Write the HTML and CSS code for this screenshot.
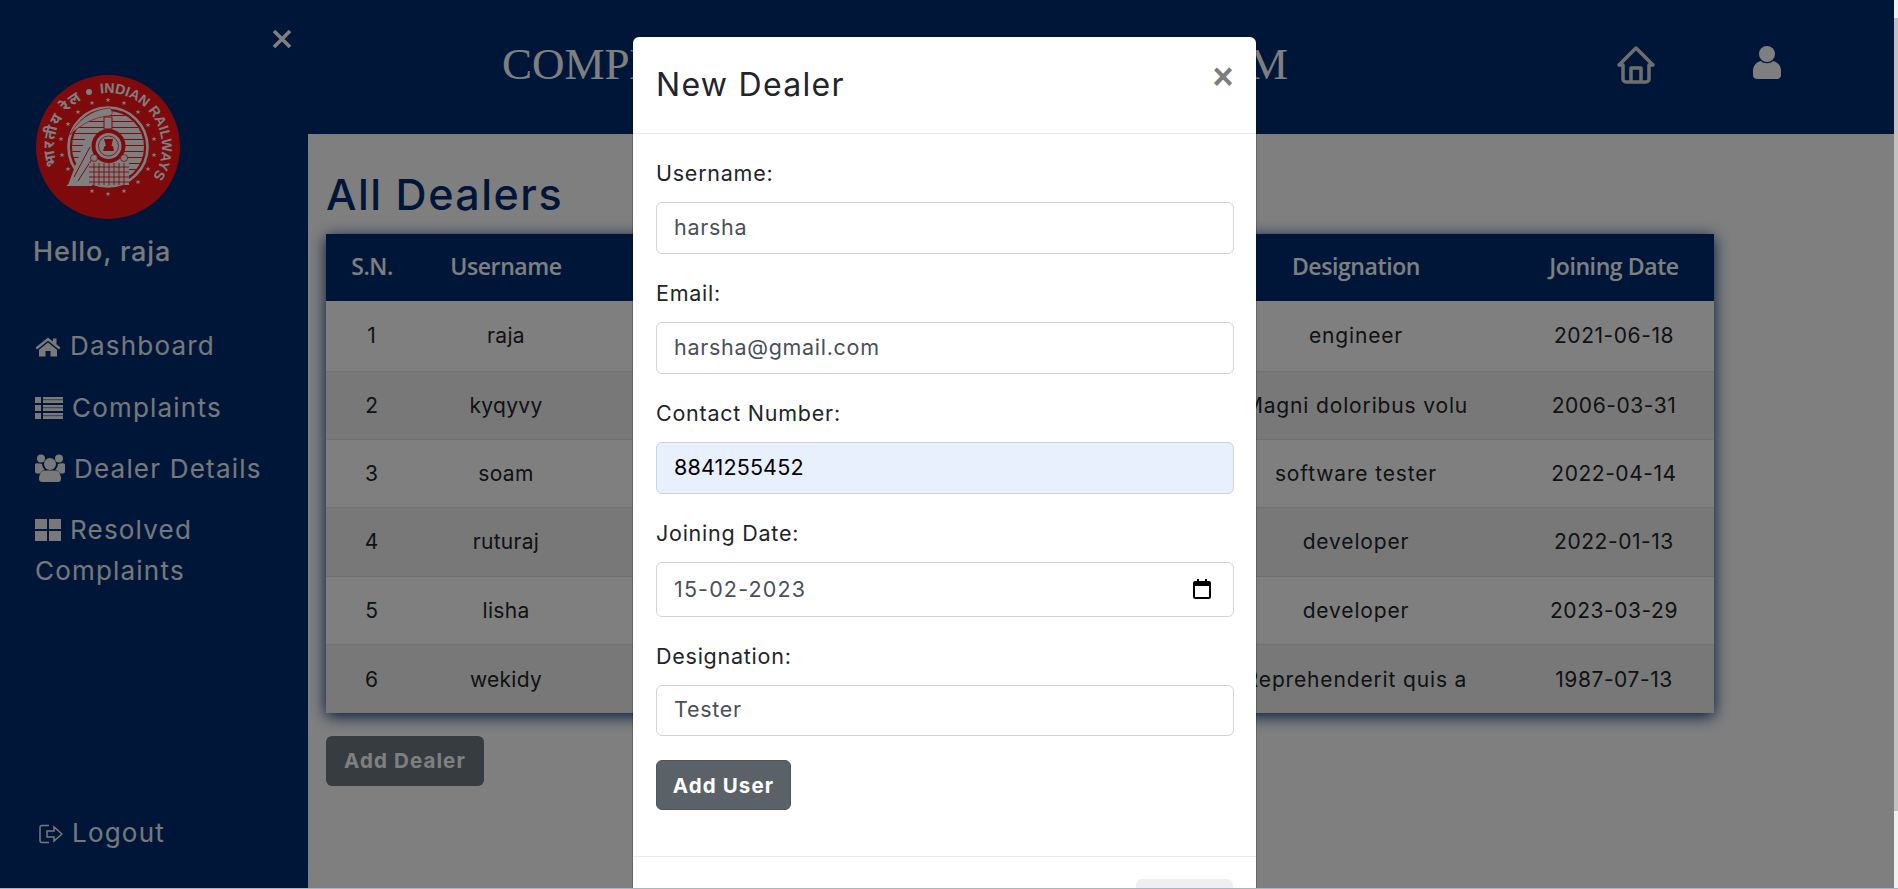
FILE: index.html
```html
<!DOCTYPE html>
<html lang="en">
<head>
<meta charset="utf-8">
<title>All Dealers</title>
<link rel="stylesheet" href="styles.css">
</head>
<body>
<div class="window">
  <div class="app">
    <aside class="sidebar">
      <div class="side-close">
        <svg class="x-icon" viewBox="0 0 20 20"><path d="M2 2 L18 18 M18 2 L2 18"/></svg>
      </div>
      <svg class="logo" viewBox="0 0 144 144">
        <defs>
          <path id="arcEn" d="M64.500 18.500 A54 54 0 0 1 116.800 102.200" fill="none"/>
          <path id="arcHi" d="M21.300 90.500 A54 54 0 0 1 45.800 24.800" fill="none"/>
          <polygon id="star" points="0,-2.6 0.7,-0.8 2.5,-0.8 1.1,0.3 1.6,2.1 0,1 -1.6,2.1 -1.1,0.3 -2.5,-0.8 -0.7,-0.8"/>
          <clipPath id="discClip"><circle cx="72" cy="72" r="36"/></clipPath>
        </defs>
        <circle cx="72" cy="72" r="72" fill="#fd1418"/>
        <circle cx="53" cy="17" r="3" fill="#fff"/>
        <text class="logo-en"><textPath href="#arcEn" textLength="124" lengthAdjust="spacing">INDIAN RAILWAYS</textPath></text>
        <text class="logo-hi"><textPath href="#arcHi" textLength="76">भारतीय रेल</textPath></text>
        <g fill="#fff">
          <use href="#star" x="72" y="25"/><use href="#star" x="88" y="28"/><use href="#star" x="102" y="37"/>
          <use href="#star" x="112" y="50"/><use href="#star" x="118" y="64"/><use href="#star" x="118" y="80"/>
          <use href="#star" x="112" y="94"/><use href="#star" x="102" y="107"/><use href="#star" x="88" y="116"/>
          <use href="#star" x="72" y="119"/><use href="#star" x="56" y="116"/><use href="#star" x="32" y="94"/>
          <use href="#star" x="26" y="80"/><use href="#star" x="25" y="64"/><use href="#star" x="32" y="49"/>
          <use href="#star" x="42" y="37"/><use href="#star" x="56" y="28"/>
        </g>
        <circle cx="72" cy="72" r="39.5" fill="none" stroke="#fff" stroke-width="2.6"/>
        <g clip-path="url(#discClip)">
          <rect x="30" y="30" width="84" height="84" fill="#fff"/>
          <path d="M30 40.500H114M30 46.500H114M30 52.500H114M30 58.500H114M30 64.500H114M30 70.500H114M30 76.500H114M30 82.500H114M30 88.500H114M30 94.500H114M30 100.500H114" stroke="#fd1418" stroke-width="1.1"/>
        </g>
        <path d="M74 33 C58 34 42 44 34 60 C46 48 60 42 72 41 C76 41 78 38 74 33Z" fill="#fff" stroke="#fd1418" stroke-width=".6"/>
        <path d="M32 110 L50 62 L58 62 L54 110Z" fill="#fff"/>
        <path d="M38 102 L54 72 M42 106 L56 84" stroke="#fd1418" stroke-width="1"/>
        <path d="M30 111 H56 V107 H36Z" fill="#fff"/>
        <rect x="68" y="42" width="8" height="12" fill="#fff" stroke="#fd1418"/>
        <circle cx="72.500" cy="71" r="17" fill="#fd1418"/>
        <circle cx="72.500" cy="71" r="13" fill="#fff"/>
        <circle cx="72.500" cy="71" r="10" fill="none" stroke="#fd1418" stroke-width=".8"/>
        <path d="M68 64H77L75.500 71H77L78 76H67L68.500 71H70Z" fill="#fd1418"/>
        <g>
          <rect x="53" y="88" width="40" height="22" fill="#fff"/>
          <path d="M53 92H93M53 97H93M53 102H93M53 107H93M58 88V110M63 88V110M68 88V110M73 88V110M78 88V110M83 88V110M88 88V110" stroke="#fd1418" stroke-width=".9"/>
          <circle cx="58" cy="83" r="3.500" fill="#fff" stroke="#fd1418" stroke-width=".8"/>
          <circle cx="88" cy="83" r="3.500" fill="#fff" stroke="#fd1418" stroke-width=".8"/>
        </g>
      </svg>
      <h4 class="hello">Hello, raja</h4>
      <nav class="nav">
        <a class="nav-link nav-dash">
          <svg class="nav-icon ic-home" viewBox="0 0 26 20"><path d="M13 0.500 L0.500 10.500 L2 12.500 L13 3.800 L24 12.500 L25.500 10.500 L21.500 7.300 V1.500 H18 V4.500Z"/><path d="M13 5.500 L4 12.800 V19.500 H10.500 V14 H15.500 V19.500 H22 V12.800Z"/></svg>Dashboard
        </a>
        <a class="nav-link nav-comp">
          <svg class="nav-icon ic-list" viewBox="0 0 28 22"><path d="M0 0H6V6H0ZM8 0H28V6H8ZM0 8H6V14H0ZM8 8H28V14H8ZM0 16H6V22H0ZM8 16H28V22H8Z" /><path d="M8 2.700H28M8 10.700H28M8 18.700H28" stroke="#002d73" stroke-width=".6"/></svg>Complaints
        </a>
        <a class="nav-link nav-deal">
          <svg class="nav-icon ic-users" viewBox="0 0 30 28"><circle cx="6" cy="4.500" r="4"/><circle cx="24" cy="4.500" r="4"/><circle cx="15" cy="10" r="6"/><path d="M0 10.500 C0 9 4 9 7 10 C7.500 12.500 8 14 9.500 15.500 C7.500 16.500 6 18 5 19.500 H2 C0.500 19.500 0 18.500 0 17Z"/><path d="M30 10.500 C30 9 26 9 23 10 C22.500 12.500 22 14 20.500 15.500 C22.500 16.500 24 18 25 19.500 H28 C29.500 19.500 30 18.500 30 17Z"/><path d="M9 16.500 H21 C24 17 26 21 26 25 C26 27 24.500 28 23 28 H7 C5.500 28 4 27 4 25 C4 21 6 17 9 16.500Z"/></svg>Dealer Details
        </a>
        <a class="nav-link nav-res">
          <svg class="nav-icon ic-grid" viewBox="0 0 26 22"><path d="M0 0H12V10H0ZM14 0H26V10H14ZM0 12H12V22H0ZM14 12H26V22H14Z"/></svg>Resolved Complaints
        </a>
      </nav>
      <a class="nav-link logout">
        <svg class="nav-icon ic-out" viewBox="0 0 24 20"><path d="M10 1.500 H3 A2 2 0 0 0 1 3.500 V16.500 A2 2 0 0 0 3 18.500 H10 M8 7 H15 V3 L23 10 L15 17 V13 H8Z"/></svg>Logout
      </a>
    </aside>
    <main class="main">
      <header class="topbar">
        <h1 class="brand">COMPLAINT MANAGEMENT SYSTEM</h1>
        <svg class="top-home" viewBox="0 0 38 38"><path d="M19 2 L2 19 H6 V33 A3 3 0 0 0 9 36 H29 A3 3 0 0 0 32 33 V19 H36Z M14 36 V22 H24 V36"/></svg>
        <svg class="top-user" viewBox="0 0 28 33"><circle cx="14" cy="8" r="8"/><path d="M8 15 C10 18 18 18 20 15 C25 16 28 20 28 25 V29 C28 31.500 26 33 24 33 H4 C2 33 0 31.500 0 29 V25 C0 20 3 16 8 15Z"/></svg>
      </header>
      <section class="content">
        <h2 class="page-title">All Dealers</h2>
        <table class="dealers">
          <colgroup><col class="c-sn"><col class="c-user"><col class="c-mail"><col class="c-phone"><col class="c-desig"><col class="c-date"></colgroup>
          <thead>
            <tr><th>S.N.</th><th>Username</th><th>Email</th><th>Contact Number</th><th>Designation</th><th>Joining Date</th></tr>
          </thead>
          <tbody>
            <tr class="first"><td>1</td><td>raja</td><td>raja@gmail.com</td><td>9876543210</td><td>engineer</td><td>2021-06-18</td></tr>
            <tr><td>2</td><td>kyqyvy</td><td>ky@mail.com</td><td>1987654321</td><td>Magni doloribus volu</td><td>2006-03-31</td></tr>
            <tr><td>3</td><td>soam</td><td>soam@gmail.com</td><td>8765432109</td><td>software tester</td><td>2022-04-14</td></tr>
            <tr><td>4</td><td>ruturaj</td><td>raj@gmail.com</td><td>7654321098</td><td>developer</td><td>2022-01-13</td></tr>
            <tr><td>5</td><td>lisha</td><td>lisha@gmail.com</td><td>6543210987</td><td>developer</td><td>2023-03-29</td></tr>
            <tr><td>6</td><td>wekidy</td><td>wek@mail.com</td><td>1543210987</td><td>Reprehenderit quis a</td><td>1987-07-13</td></tr>
          </tbody>
        </table>
        <button class="btn btn-dealer" type="button">Add Dealer</button>
      </section>
    </main>
    <div class="backdrop"></div>
    <div class="modal">
      <div class="modal-head">
        <h4 class="modal-title">New Dealer</h4>
        <button class="modal-x" type="button">×</button>
      </div>
      <form class="modal-body">
        <div class="group"><label class="lbl">Username:</label><input class="field" type="text" value="harsha"></div>
        <div class="group"><label class="lbl">Email:</label><input class="field" type="text" value="harsha@gmail.com"></div>
        <div class="group"><label class="lbl">Contact Number:</label><input class="field filled" type="text" value="8841255452"></div>
        <div class="group date-group"><label class="lbl">Joining Date:</label>
          <div class="field date-field"><input class="date-input" type="text" value="15-02-2023">
            <svg class="cal" viewBox="0 0 18 20"><path d="M4 0H6V2H12V0H14V2H16A2 2 0 0 1 18 4V18A2 2 0 0 1 16 20H2A2 2 0 0 1 0 18V4A2 2 0 0 1 2 2H4ZM2 7V18H16V7Z"/></svg>
          </div>
        </div>
        <div class="group last"><label class="lbl">Designation:</label><input class="field" type="text" value="Tester"></div>
        <button class="btn btn-add" type="button">Add User</button>
      </form>
      <div class="modal-foot"><button class="btn-close" type="button">Close</button></div>
    </div>
  </div>
  <div class="scrollbar"><div class="thumb"></div></div>
</div>
<div class="edge"></div>
</body>
</html>
```
FILE: styles.css
```css
* { box-sizing: border-box; }
html, body { margin: 0; height: 889px; overflow: hidden; }
body { font-family: Inter, "Noto Sans", sans-serif; color: #212529; background: #fff; }

.window { display: flex; height: 888px; }
.edge { height: 1px; background: #a9b6bb; }
.scrollbar { width: 4px; background: #f1f1f1; padding: 18px 0 77px; }
.thumb { height: 100%; background: #c1c1c1; }

.app { position: relative; flex: 1; display: flex; overflow: hidden; }

/* sidebar */
.sidebar { width: 308px; flex: none; background: #002d73; color: #f2f2f2; padding: 0 0 0 35px; display: flex; flex-direction: column; }
.side-close { height: 75px; display: flex; justify-content: flex-end; padding: 29px 16px 0 0; }
.x-icon { width: 20px; height: 20px; fill: none; stroke: #fff; stroke-width: 3.6; }
.logo { width: 144px; height: 144px; margin-left: 1px; }
.logo-en { font-family: "Liberation Sans", sans-serif; font-weight: 700; font-size: 14px; fill: #fff; }
.logo-hi { font-family: "Noto Sans", "DejaVu Sans", sans-serif; font-weight: 700; font-size: 15px; fill: #fff; }
.hello { margin: 15px 0 0 -2px; font-size: 27px; line-height: 36px; font-weight: 500; color: #f4f4f4; letter-spacing: .85px; }
.nav { display: flex; flex-direction: column; margin-top: 55px; }
.nav-link { display: block; font-size: 26px; line-height: 41px; color: #eef0f2; letter-spacing: 1.2px; }
.nav-comp { margin-top: 21px; }
.nav-deal, .nav-res { margin-top: 20px; }
.nav-icon { fill: #f2f2f2; vertical-align: -2px; margin-right: 9px; }
.ic-home { width: 26px; height: 20px; }
.ic-list { width: 28px; height: 22px; margin-right: 9px; vertical-align: -2px; }
.ic-users { width: 30px; height: 28px; margin-right: 9px; vertical-align: -4px; }
.ic-grid { width: 26px; height: 22px; }
.ic-out { width: 24px; height: 20px; fill: none; stroke: #f2f2f2; stroke-width: 1.5; margin-left: 4px; margin-right: 9px; }
.logout { margin-top: auto; margin-bottom: 35px; }

/* main */
.main { flex: 1; min-width: 0; display: flex; flex-direction: column; background: #fff; }
.topbar { height: 134px; flex: none; background: #002d73; display: flex; align-items: flex-start; padding: 37px 113px 0 194px; }
.brand { margin: 0; font-family: "Liberation Serif", serif; font-weight: 400; font-size: 45px; line-height: 54px; color: #fff; white-space: nowrap; }
.top-home { width: 38px; height: 38px; margin: 9px 0 0 auto; fill: none; stroke: #ddd; stroke-width: 3.5; stroke-linejoin: round; }
.top-user { width: 28px; height: 33px; margin: 9px 0 0 98px; fill: #fff; }
.content { padding: 0 0 0 18px; }
.page-title { margin: 0; height: 100px; padding-top: 35px; font-size: 43px; line-height: 50px; font-weight: 500; color: #002d73; letter-spacing: 1.5px; }

.dealers { table-layout: fixed; width: 1388px; border-collapse: collapse; box-shadow: 0 3px 15px #002d73; background: #fff; }
.c-sn { width: 92px; } .c-user { width: 176px; } .c-mail { width: 302px; } .c-phone { width: 302px; } .c-desig { width: 316px; } .c-date { width: 200px; }
.dealers th { height: 67px; background: #002d73; color: #fff; font-family: "Open Sans", sans-serif; font-weight: 600; font-size: 23px; text-align: center; padding: 0 0 4px; letter-spacing: -.4px; }
.dealers td { height: 68.4px; text-align: center; padding: 0; font-size: 21px; color: #212529; border-top: 1px solid #dee2e6; white-space: nowrap; overflow: hidden; letter-spacing: .85px; }
.dealers td:nth-child(2) { letter-spacing: .3px; }
.dealers td:nth-child(6) { letter-spacing: .55px; }
.dealers tr.first td { height: 70px; border-top: 0; }
.dealers tbody tr:nth-child(even) td { background: #f0f0f0; }

.btn { display: block; border: 1px solid transparent; border-radius: 6px; font-family: inherit; font-weight: 700; font-size: 20.5px; letter-spacing: 1.1px; }
.btn-dealer { margin-top: 23px; width: 158px; height: 50px; background: #6f7980; color: #fff; padding: 0; }

/* modal */
.backdrop { position: absolute; inset: 0; background: rgba(0,0,0,.5); }
.modal { position: absolute; left: 633px; top: 37px; width: 623px; background: #fff; border-radius: 6px; box-shadow: 0 0 0 1px rgba(0,0,0,.2); }
.modal-head { height: 97px; border-bottom: 1px solid #e9ecef; padding: 0 23px; display: flex; justify-content: space-between; }
.modal-title { margin: 0; padding-top: 28px; font-size: 32px; line-height: 40px; font-weight: 400; color: #212529; letter-spacing: 1.3px; }
.modal-x { border: 0; background: none; padding: 0; margin: 15px -2px 0 0; width: 24px; height: 50px; font: 700 36px/50px "Liberation Sans", sans-serif; color: #7d7d7d; }
.modal-body { padding: 25px 23px 46px; }
.group { margin-bottom: 25.5px; }
.group.date-group { margin-bottom: 24.5px; }
.group.last { margin-bottom: 24px; }
.lbl { display: block; height: 30px; line-height: 28px; margin-bottom: 13px; font-size: 21.5px; color: #212529; letter-spacing: .75px; }
.field { display: block; width: 578px; height: 51.5px; border: 1px solid #ced4da; border-radius: 6px; padding: 0 17px 2px; font-family: inherit; font-size: 21.5px; color: #495057; background: #fff; letter-spacing: .7px; }
.filled { background: #e8f0fe; color: #000; letter-spacing: .15px; }
.date-field { display: flex; align-items: center; justify-content: space-between; height: 55px; padding-right: 22px; letter-spacing: 1.15px; }
.date-input { border: 0; padding: 0; flex: 1; min-width: 0; font: inherit; color: inherit; letter-spacing: inherit; background: none; outline: none; }
.cal { width: 18px; height: 20px; fill: #000; }
.btn-add { width: 135px; height: 50px; background: #5a6268; color: #fff; border-color: #4e555b; padding: 0; }
.modal-foot { border-top: 1px solid #e9ecef; padding: 22px 23px 30px; display: flex; justify-content: flex-end; }
.btn-close { width: 97px; height: 50px; border: 0; border-radius: 6px; background: #efefef; color: #333; font-family: inherit; font-size: 20px; }
```
